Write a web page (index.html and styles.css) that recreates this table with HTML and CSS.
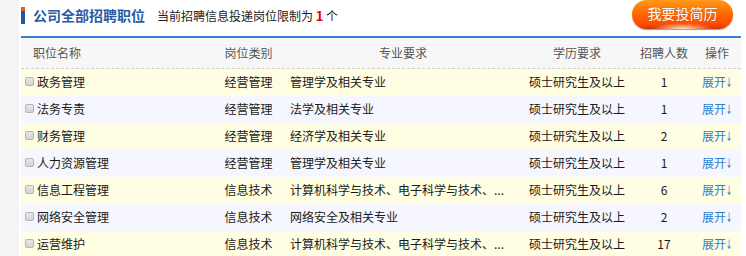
FILE: index.html
```html
<!DOCTYPE html>
<html lang="zh-CN">
<head>
<meta charset="utf-8">
<link rel="stylesheet" href="styles.css">
</head>
<body>
<div class="page">
  <div class="side"></div>
  <div class="main">
    <div class="topbar">
      <span class="mark"></span>
      <h2 class="title">公司全部招聘职位</h2>
      <span class="limit">当前招聘信息投递岗位限制为 <b>1</b> 个</span>
      <a class="apply">我要投简历</a>
    </div>
    <div class="table">
      <div class="row head">
        <div class="c1">职位名称</div>
        <div class="c2">岗位类别</div>
        <div class="c3">专业要求</div>
        <div class="c4">学历要求</div>
        <div class="c5">招聘人数</div>
        <div class="c6">操作</div>
      </div>
      <div class="row odd">
        <div class="c1"><i class="cb"></i>政务管理</div>
        <div class="c2">经营管理</div>
        <div class="c3">管理学及相关专业</div>
        <div class="c4">硕士研究生及以上</div>
        <div class="c5">1</div>
        <div class="c6"><a class="more">展开<span class="arr">↓</span></a></div>
      </div>
      <div class="row even">
        <div class="c1"><i class="cb"></i>法务专责</div>
        <div class="c2">经营管理</div>
        <div class="c3">法学及相关专业</div>
        <div class="c4">硕士研究生及以上</div>
        <div class="c5">1</div>
        <div class="c6"><a class="more">展开<span class="arr">↓</span></a></div>
      </div>
      <div class="row odd">
        <div class="c1"><i class="cb"></i>财务管理</div>
        <div class="c2">经营管理</div>
        <div class="c3">经济学及相关专业</div>
        <div class="c4">硕士研究生及以上</div>
        <div class="c5">2</div>
        <div class="c6"><a class="more">展开<span class="arr">↓</span></a></div>
      </div>
      <div class="row even">
        <div class="c1"><i class="cb"></i>人力资源管理</div>
        <div class="c2">经营管理</div>
        <div class="c3">管理学及相关专业</div>
        <div class="c4">硕士研究生及以上</div>
        <div class="c5">1</div>
        <div class="c6"><a class="more">展开<span class="arr">↓</span></a></div>
      </div>
      <div class="row odd">
        <div class="c1"><i class="cb"></i>信息工程管理</div>
        <div class="c2">信息技术</div>
        <div class="c3">计算机科学与技术、电子科学与技术、...</div>
        <div class="c4">硕士研究生及以上</div>
        <div class="c5">6</div>
        <div class="c6"><a class="more">展开<span class="arr">↓</span></a></div>
      </div>
      <div class="row even">
        <div class="c1"><i class="cb"></i>网络安全管理</div>
        <div class="c2">信息技术</div>
        <div class="c3">网络安全及相关专业</div>
        <div class="c4">硕士研究生及以上</div>
        <div class="c5">2</div>
        <div class="c6"><a class="more">展开<span class="arr">↓</span></a></div>
      </div>
      <div class="row odd">
        <div class="c1"><i class="cb"></i>运营维护</div>
        <div class="c2">信息技术</div>
        <div class="c3">计算机科学与技术、电子科学与技术、...</div>
        <div class="c4">硕士研究生及以上</div>
        <div class="c5">17</div>
        <div class="c6"><a class="more">展开<span class="arr">↓</span></a></div>
      </div>
    </div>
  </div>
</div>
</body>
</html>
```

FILE: styles.css
```css
html, body {
  margin: 0;
  padding: 0;
  background: #fff;
  font-family: "Noto Sans CJK SC", "Noto Sans", sans-serif;
  font-size: 12px;
  color: #1a1a1a;
  overflow: hidden;
}
.page {
  display: flex;
  height: 256px;
}
.side {
  width: 19px;
  background: #f4f4f4;
  flex: none;
}
.main {
  margin-left: 2px;
  width: 720px;
  flex: none;
}
.topbar {
  height: 36px;
  display: flex;
  align-items: flex-start;
  position: relative;
}
.mark {
  width: 4px;
  height: 17px;
  margin-top: 7px;
  background: linear-gradient(#f05a14 0, #f05a14 4px, #2456a4 4px, #2456a4 100%);
  flex: none;
}
.title {
  margin: 6px 0 0 8px;
  font-size: 14px;
  font-weight: bold;
  color: #2b5ba5;
  line-height: 18px;
}
.limit {
  margin-left: 12px;
  line-height: 18px;
  margin-top: 7px;
  color: #222;
  font-size: 12px;
}
.limit b {
  color: #e60000;
  font-weight: bold;
  font-size: 13px;
}
.apply {
  position: absolute;
  right: 8px;
  top: 0;
  width: 101px;
  height: 29px;
  border-radius: 15px;
  color: #fff;
  font-size: 14px;
  line-height: 27px;
  text-align: center;
  background:
    radial-gradient(ellipse 30px 6px at 50% 100%, rgba(255,245,210,0.95), rgba(255,200,120,0) 100%),
    linear-gradient(#ff9a1a 0%, #ff6a00 45%, #ff4a00 85%, #c83a10 100%);
  box-shadow: 0 1px 1px rgba(120,40,0,0.5);
  text-shadow: 0 0 1px rgba(160,50,0,0.5);
}
.table {
  border-top: 2px solid #3a7fd5;
}
.row {
  display: grid;
  grid-template-columns: 197px 61px 248px 100px 74px 32px;
  height: 27px;
  box-sizing: border-box;
  padding-bottom: 2px;
  align-items: center;
  white-space: nowrap;
}
.row.head {
  height: 31px;
  background: #f7f7f7;
  border-bottom: 1px dashed #cfcfcf;
  color: #555;
  padding-bottom: 2px;
}
.row.head .c1 {
  padding-left: 12px;
}
.row.head .c3 {
  text-align: center;
  padding-left: 0;
}
.odd {
  background: #fffde2;
}
.even {
  background: #f6f7fe;
}
.c1 {
  padding-left: 4px;
  display: flex;
  align-items: center;
}
.c2, .c4, .c5, .c6 {
  text-align: center;
}
.c3 {
  padding-left: 11px;
  overflow: hidden;
}
.cb {
  width: 7px;
  height: 7px;
  border: 1px solid #b5b5b5;
  border-radius: 2px;
  background: linear-gradient(#e8e8e8, #d2d2d2);
  margin-right: 3px;
  flex: none;
}
.more {
  color: #2f7fd0;
}
.arr {
  display: inline-block;
  font-family: "DejaVu Sans", sans-serif;
  font-size: 13px;
  width: 6px;
  transform: scaleX(0.55);
  transform-origin: left center;
}
```
